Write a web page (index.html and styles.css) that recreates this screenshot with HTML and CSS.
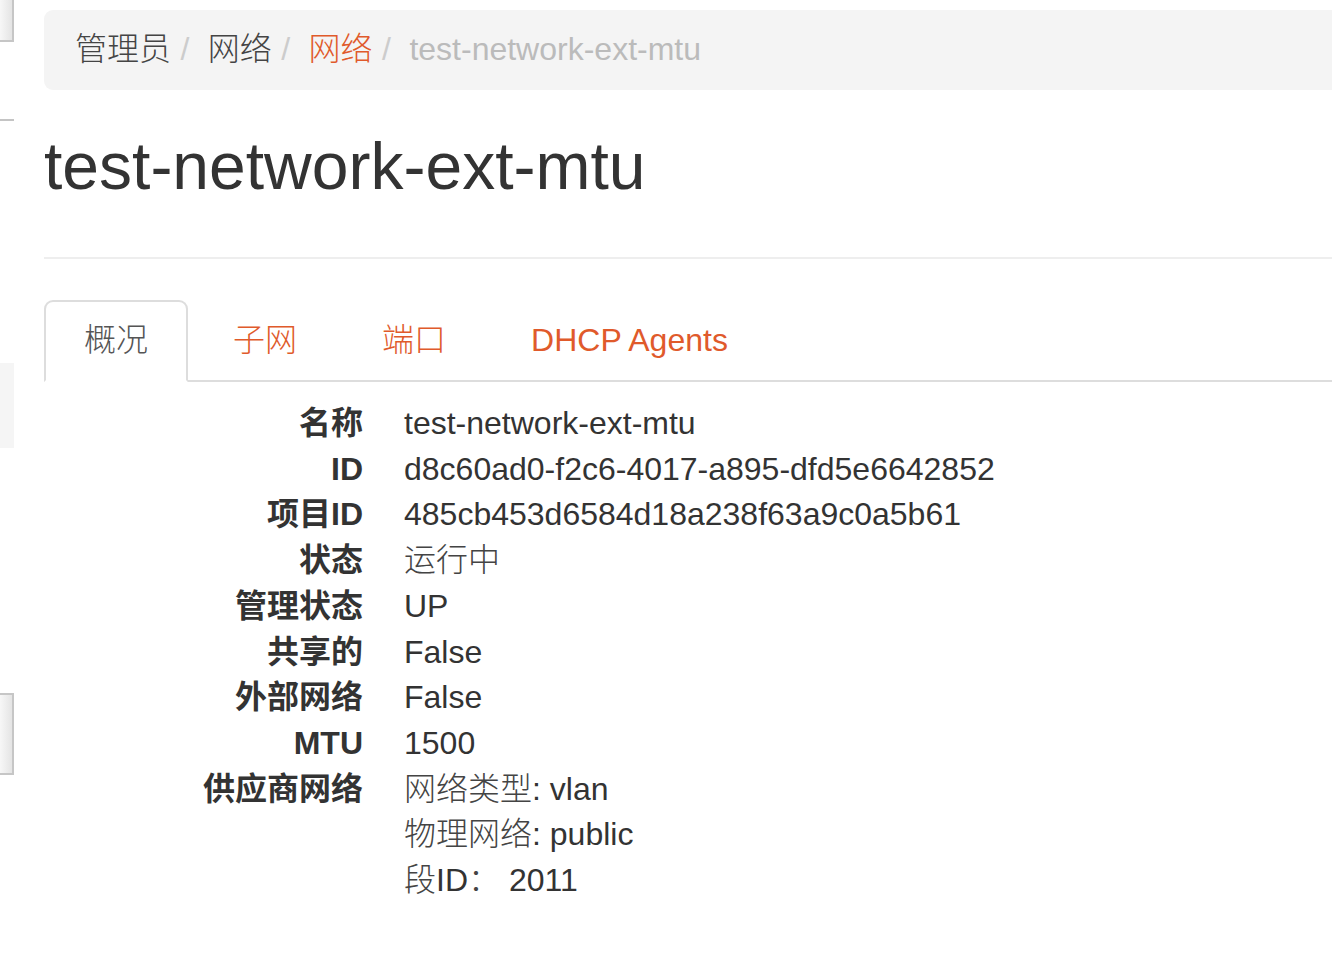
FILE: index.html
```html
<!DOCTYPE html>
<html lang="zh-CN">
<head>
<meta charset="utf-8">
<title>test-network-ext-mtu</title>
<link rel="stylesheet" href="styles.css">
</head>
<body>
<div class="page">
  <aside class="rail">
    <div class="rail-btn rail-top"></div>
    <div class="rail-line"></div>
    <div class="rail-active"></div>
    <div class="rail-btn rail-bottom"></div>
  </aside>
  <main class="main">
    <ol class="breadcrumb">
      <li>管理员</li><li>网络</li><li><a href="#">网络</a></li><li class="active">test-network-ext-mtu</li>
    </ol>
    <div class="page-header">
      <h1>test-network-ext-mtu</h1>
    </div>
    <ul class="tabs">
      <li class="active"><a href="#">概况</a></li>
      <li><a href="#">子网</a></li>
      <li><a href="#">端口</a></li>
      <li><a href="#">DHCP Agents</a></li>
    </ul>
    <dl class="detail">
      <dt>名称</dt><dd>test-network-ext-mtu</dd>
      <dt>ID</dt><dd>d8c60ad0-f2c6-4017-a895-dfd5e6642852</dd>
      <dt>项目ID</dt><dd>485cb453d6584d18a238f63a9c0a5b61</dd>
      <dt>状态</dt><dd class="cj">运行中</dd>
      <dt>管理状态</dt><dd>UP</dd>
      <dt>共享的</dt><dd>False</dd>
      <dt>外部网络</dt><dd>False</dd>
      <dt>MTU</dt><dd>1500</dd>
      <dt>供应商网络</dt>
      <dd>
        <div><span class="cj">网络类型</span>: vlan</div>
        <div><span class="cj">物理网络</span>: public</div>
        <div><span class="cj">段</span>ID<span class="cj">：</span> 2011</div>
      </dd>
    </dl>
  </main>
</div>
</body>
</html>
```
FILE: styles.css
```css
html, body {
  margin: 0;
  padding: 0;
  overflow: hidden;
  background: #fff;
}

body {
  font-family: "Liberation Sans", "Noto Sans CJK SC", sans-serif;
  font-size: 32px;
  line-height: 1.42857;
  color: #333;
}

.page {
  display: flex;
  align-items: flex-start;
}

/* left rail remnants */
.rail {
  width: 14px;
  flex: none;
  display: flex;
  flex-direction: column;
}

.rail-btn {
  box-sizing: border-box;
  width: 14px;
  background: linear-gradient(to right, #f7f7f7, #e4e4e4);
  border-right: 2px solid #c6c6c6;
}

.rail-top {
  height: 42px;
  border-bottom: 2px solid #c6c6c6;
}

.rail-line {
  margin-top: 77px;
  height: 2px;
  background: #c4c4c4;
}

.rail-active {
  margin-top: 242px;
  height: 85px;
  background: #f5f5f5;
}

.rail-bottom {
  margin-top: 245px;
  height: 82px;
  border-top: 2px solid #c6c6c6;
  border-bottom: 2px solid #c6c6c6;
}

.main {
  flex: 1;
  min-width: 0;
  margin-left: 30px;
  margin-right: -24px;
}

/* breadcrumb */
.breadcrumb {
  display: flex;
  list-style: none;
  margin: 10px 0 0;
  padding: 17px 31px;
  background: #f4f4f4;
  border-radius: 9px;
  font-weight: 300;
}

.breadcrumb li {
  color: #444;
  white-space: nowrap;
}

.breadcrumb li + li::before {
  content: "/\00a0";
  padding: 0 9.5px;
  color: #ccc;
}

.breadcrumb a {
  color: #e05a2b;
  text-decoration: none;
}

.breadcrumb li.active {
  color: #bbb;
}

/* header */
.page-header {
  margin-top: 40px;
  padding-bottom: 55px;
  border-bottom: 2px solid #eee;
}

.page-header h1 {
  margin: 0;
  font-size: 66px;
  line-height: 1.1;
  font-weight: normal;
  color: #333;
}

/* tabs */
.tabs {
  display: flex;
  list-style: none;
  margin: 41px 0 0;
  padding: 0;
  border-bottom: 2px solid #ddd;
}

.tabs li {
  margin-right: 5px;
  margin-bottom: -2px;
}

.tabs a {
  display: block;
  padding: 16px 38px;
  border: 2px solid transparent;
  border-radius: 9px 9px 0 0;
  color: #e05a2b;
  text-decoration: none;
  font-weight: 300;
}

.tabs li.active a {
  color: #555;
  background: #fff;
  border-color: #ddd;
  border-bottom-color: transparent;
}

/* detail list */
.detail {
  display: grid;
  grid-template-columns: 319px auto;
  column-gap: 41px;
  margin: 19px 0 0;
}

.detail dt {
  font-weight: bold;
  text-align: right;
  white-space: nowrap;
}

.detail dd {
  margin: 0;
  white-space: nowrap;
}

.cj {
  font-weight: 300;
  color: #444;
}
```
